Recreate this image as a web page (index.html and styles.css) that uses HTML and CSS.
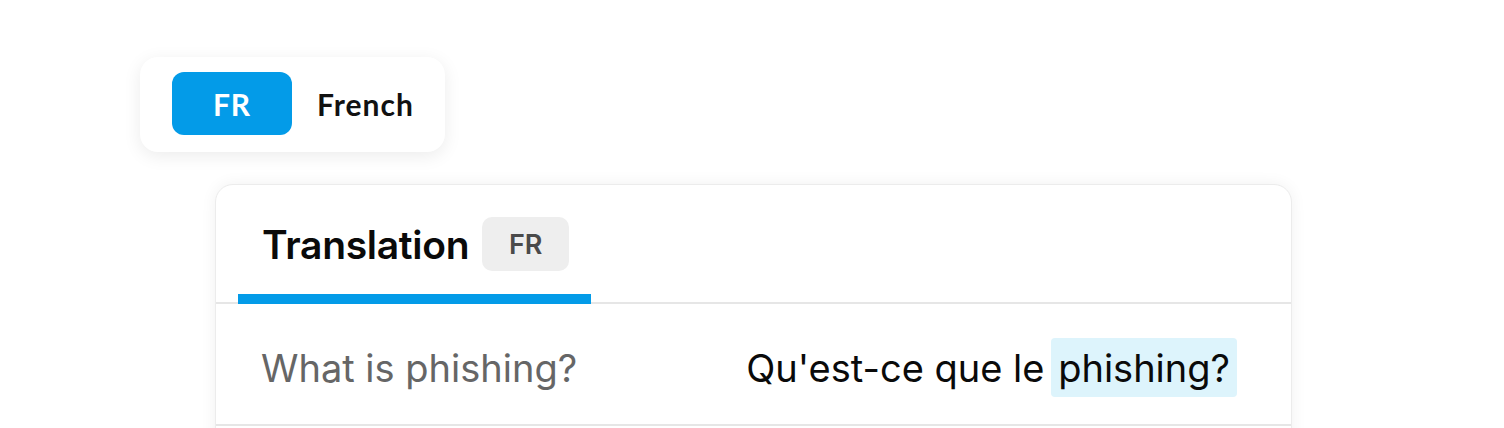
FILE: index.html
```html
<!DOCTYPE html>
<html lang="en">
<head>
<meta charset="utf-8">
<title>Translation</title>
<link rel="stylesheet" href="styles.css">
</head>
<body>
<div class="page">
  <div class="lang-pill">
    <span class="lang-code">FR</span>
    <span class="lang-name">French</span>
  </div>
  <div class="card">
    <div class="tabs">
      <div class="tab active">
        <span class="tab-title">Translation</span>
        <span class="tab-badge">FR</span>
      </div>
    </div>
    <div class="row">
      <span class="source">What is phishing?</span>
      <span class="target">Qu'est-ce que le <span class="hl">phishing?</span></span>
    </div>
    <div class="row empty"></div>
  </div>
</div>
</body>
</html>
```
FILE: styles.css
```css
html, body {
  margin: 0;
  padding: 0;
  background: #ffffff;
  overflow: hidden;
}
.page {
  width: 1504px;
  height: 428px;
  padding: 57px 0 0 0;
  box-sizing: border-box;
  display: flex;
  flex-direction: column;
  align-items: flex-start;
  overflow: hidden;
}
.lang-pill {
  margin-left: 140px;
  width: 305px;
  height: 95px;
  box-sizing: border-box;
  padding: 15px 0 17px 32px;
  border-radius: 18px;
  background: #fff;
  box-shadow: 0 4px 18px rgba(0,0,0,0.08);
  display: flex;
  align-items: center;
  gap: 25px;
  font-family: Lato, "Noto Sans", sans-serif;
  font-weight: 700;
}
.lang-code {
  width: 120px;
  height: 63px;
  border-radius: 12px;
  background: #039be8;
  color: #fff;
  font-size: 30px;
  letter-spacing: 0.8px;
  display: flex;
  align-items: center;
  justify-content: center;
  flex-shrink: 0;
}
.lang-name {
  font-size: 30px;
  letter-spacing: 1px;
  color: #111;
}
.card {
  margin-top: 32px;
  margin-left: 215px;
  width: 1077px;
  height: 300px;
  flex-shrink: 0;
  box-sizing: border-box;
  border: 1px solid #ececec;
  border-radius: 18px;
  background: #fff;
  box-shadow: 0 0 16px rgba(0,0,0,0.06);
  font-family: Inter, "Noto Sans", sans-serif;
}
.tabs {
  padding: 32px 0 0 22px;
  border-bottom: 2px solid #e6e6e6;
  display: flex;
}
.tab {
  display: flex;
  align-items: center;
  gap: 13px;
  padding: 0 22px 23px 24px;
  margin-bottom: -2px;
  border-bottom: 10px solid #039be8;
  height: 54px;
  box-sizing: content-box;
}
.tab-title {
  font-size: 39px;
  font-weight: 600;
  color: #0a0a0a;
  letter-spacing: -0.3px;
}
.tab-badge {
  width: 87px;
  height: 54px;
  border-radius: 10px;
  background: #eeeeee;
  color: #4a4a4a;
  font-size: 27px;
  font-weight: 600;
  display: flex;
  align-items: center;
  justify-content: center;
}
.row {
  height: 122px;
  box-sizing: border-box;
  border-bottom: 2px solid #e6e6e6;
  display: flex;
  align-items: center;
  justify-content: space-between;
  padding: 8px 54px 0 45px;
  font-size: 38px;
}
.source {
  color: #666;
}
.target {
  color: #0a0a0a;
}
.hl {
  background: #ddf4fc;
  border-radius: 4px;
  padding: 7px 7px 6px 7px;
  margin-left: -4px;
}
.row.empty {
  border-bottom: none;
}
```
